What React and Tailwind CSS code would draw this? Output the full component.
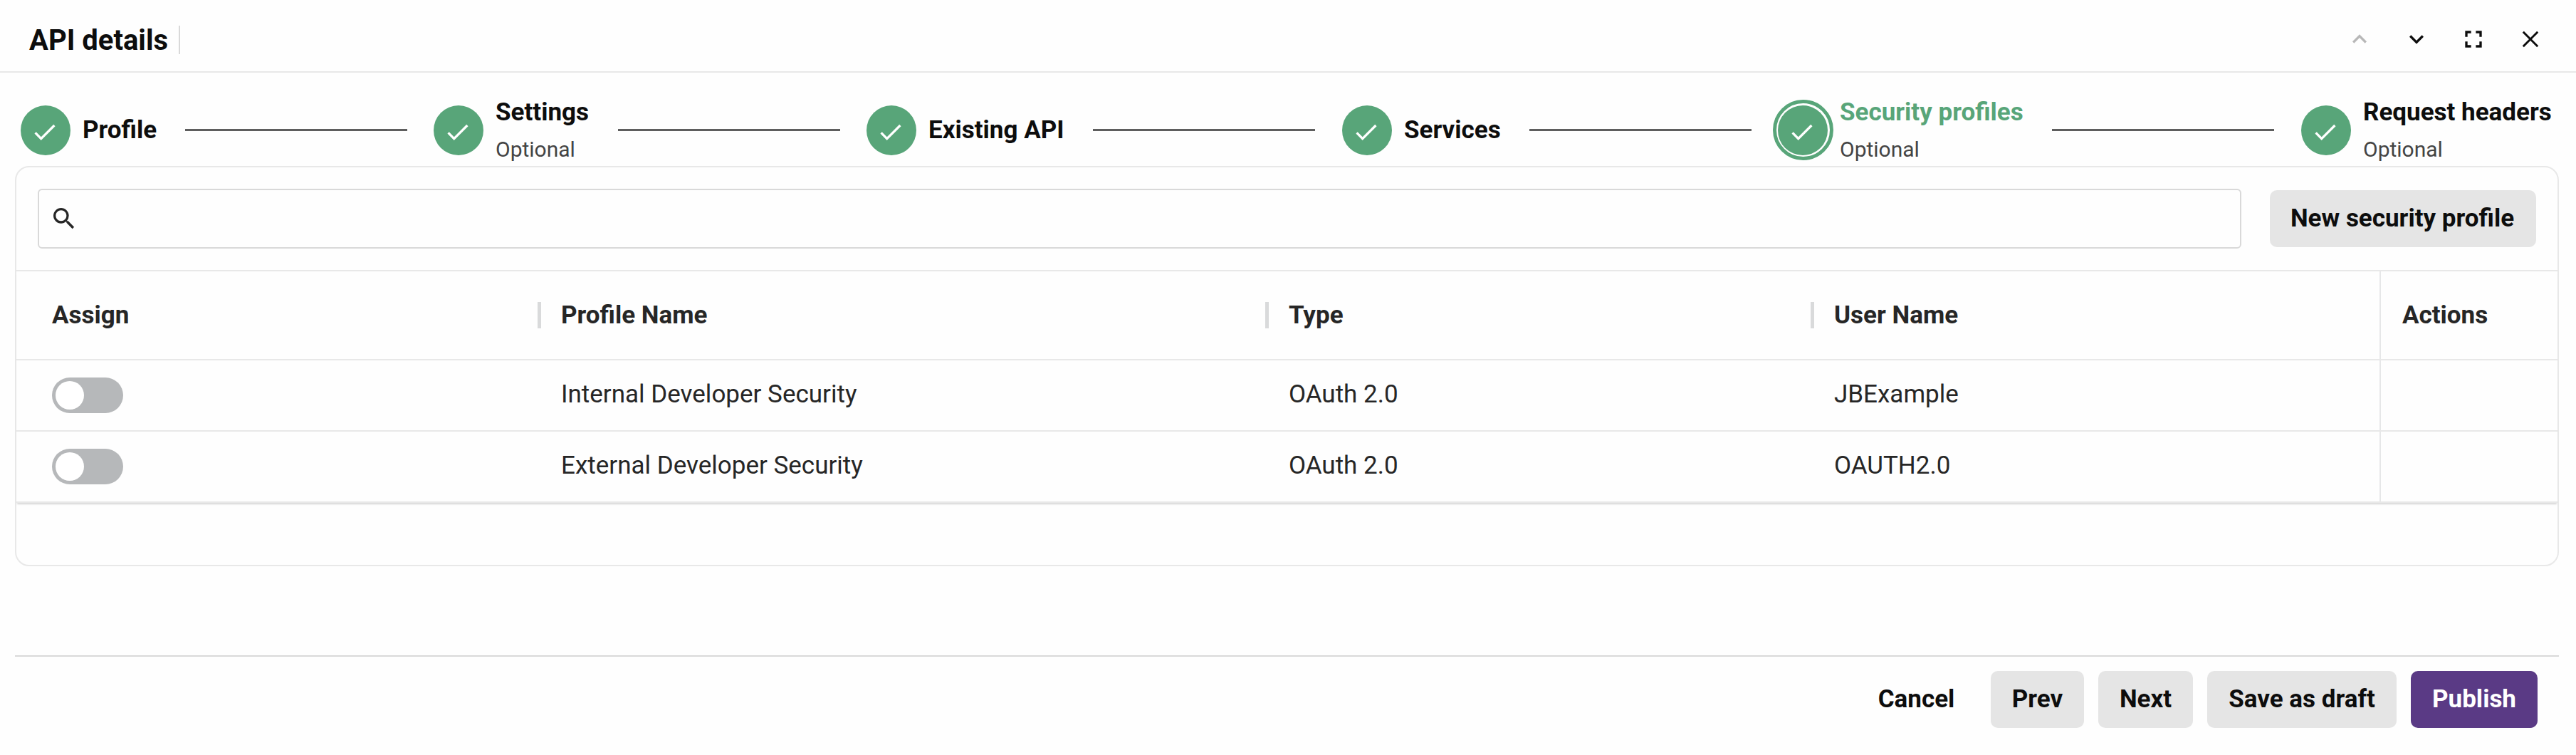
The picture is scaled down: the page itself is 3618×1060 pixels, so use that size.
import React from "react";
import clsx from "clsx";
import { MdExpandLess, MdExpandMore, MdFullscreen, MdSearch } from "react-icons/md";

const steps = [
  { label: "Profile", width: "w-[231px]", gap: "mr-[37px]" },
  { label: "Settings", optional: true, width: "w-[259px]", gap: "mr-[37px]" },
  { label: "Existing API", width: "w-[318px]", gap: "mr-[38px]" },
  { label: "Services", width: "w-[263px]", gap: "mr-[37px]" },
  { label: "Security profiles", optional: true, active: true, width: "w-[385px]", gap: "mr-[38px]" },
  { label: "Request headers", optional: true, last: true, width: "w-[360px]" },
];

const profiles = [
  { name: "Internal Developer Security", type: "OAuth 2.0", user: "JBExample" },
  { name: "External Developer Security", type: "OAuth 2.0", user: "OAUTH2.0" },
];

const GRID = "grid grid-cols-[732px_1022px_766px_799px_1fr]";

const StepCircle = ({ active }) => (
  <div className="relative flex size-[70px] shrink-0 rounded-full bg-[#58a579]">
    {/* ring around the current step */}
    {active && (
      <span className="absolute -left-[7px] -top-[8px] size-[85px] rounded-full border-5 border-[#58a579]" />
    )}
    <svg className="size-[70px]" viewBox="0 0 70 70" fill="none">
      <path d="M20.6 38.4L28.7 46.6L47.4 28" stroke="white" strokeWidth="3.3" />
    </svg>
  </div>
);

const Step = ({ step }) => (
  <>
    <div className={clsx("flex shrink-0 items-center", step.width)}>
      <StepCircle active={step.active} />
      <div className={clsx("ml-[17px] whitespace-nowrap", step.optional && "pt-1")}>
        <p
          className={clsx(
            "text-[35px] font-bold leading-[50px]",
            step.active ? "text-[#58a579]" : "text-[#0d0d0d]"
          )}
        >
          {step.label}
        </p>
        {step.optional && (
          <p className="text-[30px] leading-[54px] text-[#444444]">Optional</p>
        )}
      </div>
    </div>
    {!step.last && (
      <div className={clsx("-mt-px h-[3px] w-[312px] shrink-0 bg-[#5e5e5e]", step.gap)} />
    )}
  </>
);

const Button = ({ children, className }) => (
  <button
    className={clsx(
      "h-20 shrink-0 whitespace-nowrap rounded-[10px] text-[35px] font-bold",
      className
    )}
  >
    {children}
  </button>
);

const HeadCell = ({ children }) => (
  <div className="flex items-center">
    <span className="mr-7 h-[37px] w-[5px] bg-[#d9dadb]" />
    <span className="pt-[2px]">{children}</span>
  </div>
);

const Toggle = () => (
  <div className="flex h-[50px] w-[100px] items-center rounded-full bg-[#b6b8ba] pl-[5px]">
    <span className="size-10 rounded-full bg-white" />
  </div>
);

const App = () => {
  return (
    <div className="h-[1060px] w-[3618px] overflow-hidden bg-[#fefefe] font-['Roboto',sans-serif] text-[#262626]">

      {/* HEADER */}
      <header className="flex h-[102px] items-center justify-between border-b-2 border-[#e8e8e8] pl-[41px] pr-11">
        <div className="flex items-center pt-3">
          <h1 className="w-[210px] whitespace-nowrap pt-px text-[40px] font-bold leading-[40px] text-[#0d0d0d]">
            API details
          </h1>
          <span className="h-10 w-[2px] bg-[#d9d9d9]" />
        </div>
        <div className="flex gap-10 pt-[10px] text-[#0d0d0d]">
          <MdExpandLess size={40} className="text-[#b8b8b8]" />
          <MdExpandMore size={40} />
          <MdFullscreen size={40} />
          <svg className="size-10" viewBox="0 0 40 40" stroke="currentColor" strokeWidth="3">
            <path d="M9.8 9.8L30.2 30.2M30.2 9.8L9.8 30.2" />
          </svg>
        </div>
      </header>

      {/* STEPPER */}
      <nav className="flex h-[131px] items-center pl-[29px] pt-[31px]">
        {steps.map((step) => (
          <Step key={step.label} step={step} />
        ))}
      </nav>

      {/* TABLE CARD */}
      <section className="ml-[21px] h-[562px] w-[3573px] rounded-[20px] border-2 border-[#e8e8e8]">
        <div className="flex h-[146px] items-center border-b-2 border-[#e8e8e8] pl-[30px] pr-[30px]">
          <div className="flex h-[84px] w-[3095px] items-center rounded-[6px] border-2 border-[#d9d9d9] pl-[15px]">
            <MdSearch size={40} />
          </div>
          <Button className="ml-10 w-[374px] bg-[#e5e5e5] pr-[2px] text-[#0d0d0d]">
            New security profile
          </Button>
        </div>

        <div className="shadow-[0_3px_2px_-1px_rgba(0,0,0,0.15)]">
          <div className={clsx(GRID, "h-[125px] border-b-2 border-[#e8e8e8] text-[35px] font-bold")}>
            <div className="flex items-center pl-[50px] pt-[2px]">Assign</div>
            <HeadCell>Profile Name</HeadCell>
            <HeadCell>Type</HeadCell>
            <HeadCell>User Name</HeadCell>
            <div className="flex items-center border-l-2 border-[#e6e7e8] pl-[30px] pt-[2px]">Actions</div>
          </div>

          {profiles.map((profile) => (
            <div
              key={profile.name}
              className={clsx(GRID, "h-[100px] border-b-2 border-[#e8e8e8] text-[35px]")}
            >
              <div className="flex items-center pl-[50px]">
                <Toggle />
              </div>
              <div className="flex items-center pb-px pl-[33px]">{profile.name}</div>
              <div className="flex items-center pb-px pl-[33px]">{profile.type}</div>
              <div className="flex items-center pb-px pl-[33px]">{profile.user}</div>
              <div className="border-l-2 border-[#e6e7e8]" />
            </div>
          ))}
        </div>
      </section>

      {/* FOOTER */}
      <footer className="ml-[21px] mt-[125px] flex w-[3573px] justify-end gap-5 border-t-2 border-[#d9d9d9] pr-[30px] pt-5 text-[#0d0d0d]">
        <Button className="w-[169px]">Cancel</Button>
        <Button className="w-[131px] bg-[#e5e5e5]">Prev</Button>
        <Button className="w-[133px] bg-[#e5e5e5]">Next</Button>
        <Button className="w-[266px] bg-[#e5e5e5]">Save as draft</Button>
        <Button className="w-[178px] bg-[#5a3a85] text-white">Publish</Button>
      </footer>

    </div>
  );
};

export default App;
